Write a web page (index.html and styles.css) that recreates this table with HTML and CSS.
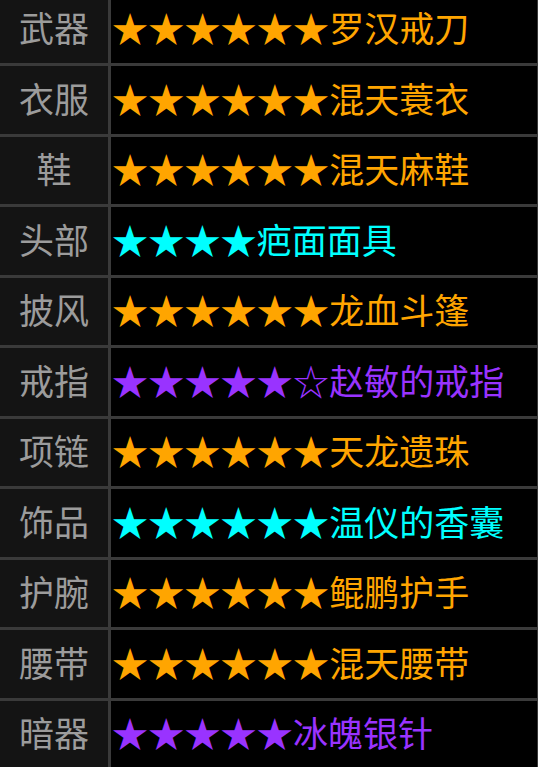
FILE: index.html
```html
<!DOCTYPE html>
<html lang="zh">
<head>
  <meta charset="UTF-8" />
  <meta name="viewport" content="width=device-width, initial-scale=1.0" />
  <title>装备</title>
  <link rel="stylesheet" href="styles.css">
</head>
<body>
  <div class="gear">
    <div class="slot">武器</div><div class="item orange"><span class="stars">★★★★★★</span>罗汉戒刀</div>
    <div class="slot">衣服</div><div class="item orange"><span class="stars">★★★★★★</span>混天蓑衣</div>
    <div class="slot">鞋</div><div class="item orange"><span class="stars">★★★★★★</span>混天麻鞋</div>
    <div class="slot">头部</div><div class="item cyan"><span class="stars">★★★★</span>疤面面具</div>
    <div class="slot">披风</div><div class="item orange"><span class="stars">★★★★★★</span>龙血斗篷</div>
    <div class="slot">戒指</div><div class="item purple"><span class="stars">★★★★★☆</span>赵敏的戒指</div>
    <div class="slot">项链</div><div class="item orange"><span class="stars">★★★★★★</span>天龙遗珠</div>
    <div class="slot">饰品</div><div class="item cyan"><span class="stars">★★★★★★</span>温仪的香囊</div>
    <div class="slot">护腕</div><div class="item orange"><span class="stars">★★★★★★</span>鲲鹏护手</div>
    <div class="slot">腰带</div><div class="item orange"><span class="stars">★★★★★★</span>混天腰带</div>
    <div class="slot">暗器</div><div class="item purple"><span class="stars">★★★★★</span>冰魄银针</div>
  </div>
</body>
</html>
```

FILE: styles.css
```css
body {
  margin: 0;
  background: #000;
  font-family: "Noto Sans CJK SC", "Noto Sans", sans-serif;
  overflow: hidden;
}
.gear {
  width: 537px;
  margin-top: -4.5px;
  padding: 0 3px 3px 0;
  display: grid;
  grid-template-columns: 108px 1fr;
  grid-auto-rows: 67.5px;
  gap: 3px;
  background: #3a3a3a;
}
.slot,
.item {
  display: flex;
  align-items: center;
  padding-bottom: 4px;
  box-sizing: border-box;
  font-size: 35px;
  line-height: 40px;
  white-space: nowrap;
}
.slot {
  justify-content: center;
  background: #141414;
  color: #9c9c9c;
}
.item {
  background: #000;
}
.stars {
  font-size: 36px;
  letter-spacing: 0.2px;
  margin-left: 1px;
}
.orange {
  color: #ffa500;
}
.cyan {
  color: #00ffff;
}
.purple {
  color: #9933ff;
}
```
